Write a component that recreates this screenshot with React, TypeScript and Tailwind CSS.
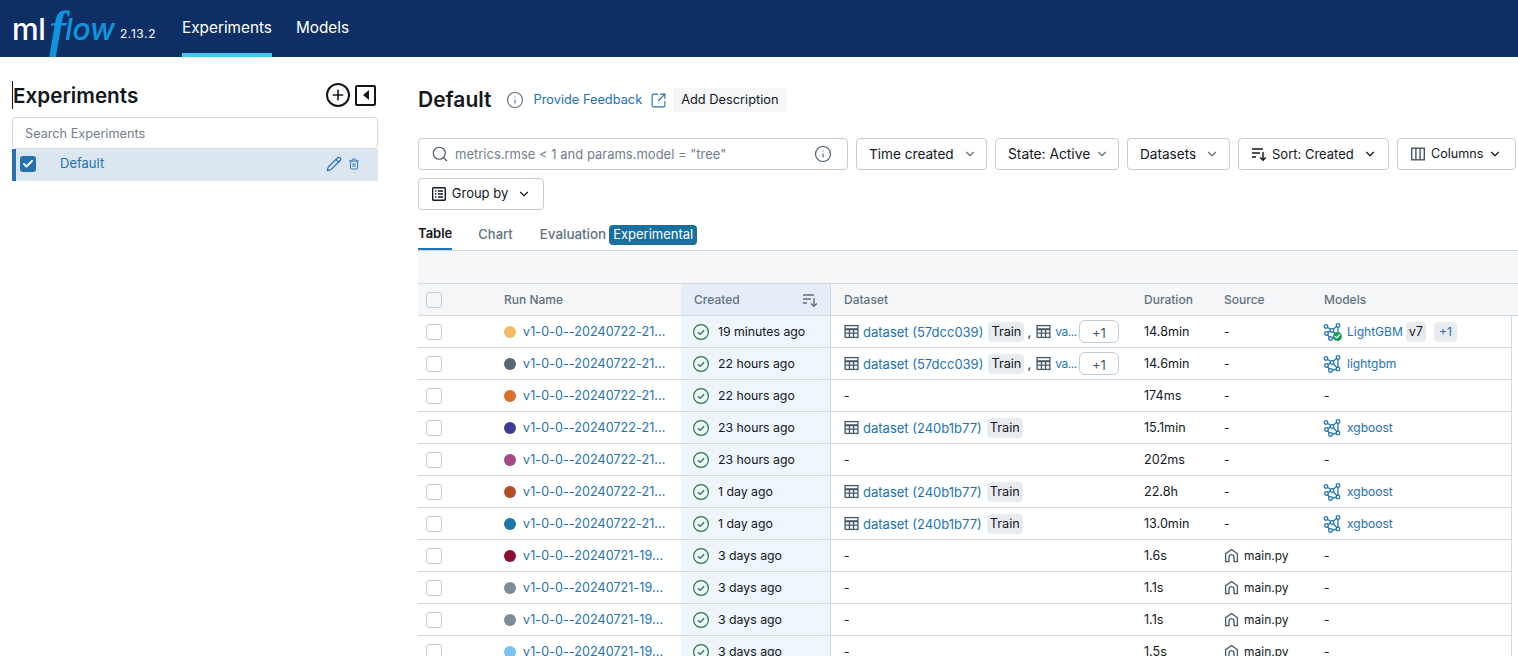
import { ChevronDown, Search, Info, Pencil, Trash2, SquareArrowOutUpRight, Check, Plus } from 'lucide-react'

type Row = {
  color: string
  name: string
  created: string
  dataset?: string
  extra?: boolean
  duration: string
  source?: string
  model?: string
  logged?: boolean
}

const rows: Row[] = [
  { color: '#f5bb61', name: 'v1-0-0--20240722-21...', created: '19 minutes ago', dataset: 'dataset (57dcc039)', extra: true, duration: '14.8min', model: 'LightGBM', logged: true },
  { color: '#566879', name: 'v1-0-0--20240722-21...', created: '22 hours ago', dataset: 'dataset (57dcc039)', extra: true, duration: '14.6min', model: 'lightgbm' },
  { color: '#d96f2b', name: 'v1-0-0--20240722-21...', created: '22 hours ago', duration: '174ms' },
  { color: '#3f3d8f', name: 'v1-0-0--20240722-21...', created: '23 hours ago', dataset: 'dataset (240b1b77)', duration: '15.1min', model: 'xgboost' },
  { color: '#a6498a', name: 'v1-0-0--20240722-21...', created: '23 hours ago', duration: '202ms' },
  { color: '#b34d26', name: 'v1-0-0--20240722-21...', created: '1 day ago', dataset: 'dataset (240b1b77)', duration: '22.8h', model: 'xgboost' },
  { color: '#1d77a8', name: 'v1-0-0--20240722-21...', created: '1 day ago', dataset: 'dataset (240b1b77)', duration: '13.0min', model: 'xgboost' },
  { color: '#8c0f33', name: 'v1-0-0--20240721-19...', created: '3 days ago', duration: '1.6s', source: 'main.py' },
  { color: '#7d8c99', name: 'v1-0-0--20240721-19...', created: '3 days ago', duration: '1.1s', source: 'main.py' },
  { color: '#7d8c99', name: 'v1-0-0--20240721-19...', created: '3 days ago', duration: '1.1s', source: 'main.py' },
  { color: '#7cc0f2', name: 'v1-0-0--20240721-19...', created: '3 days ago', duration: '1.5s', source: 'main.py' },
]

const SortIcon = ({ className }: { className?: string }) => (
  <svg viewBox="0 0 16 16" fill="none" stroke="currentColor" strokeWidth="1.4" className={className}>
    <path d="M1 3h11M1 7h8M1 11h4" />
    <path d="M12 6v8M9.2 11.4 12 14.2l2.8-2.8" />
  </svg>
)

const ColumnsIcon = ({ className }: { className?: string }) => (
  <svg viewBox="0 0 16 16" fill="none" stroke="currentColor" strokeWidth="1.4" className={className}>
    <rect x="1.7" y="2.2" width="12.6" height="11.6" />
    <path d="M5.9 2.2v11.6M10.1 2.2v11.6" />
  </svg>
)

const GroupIcon = ({ className }: { className?: string }) => (
  <svg viewBox="0 0 16 16" fill="none" stroke="currentColor" strokeWidth="1.4" className={className}>
    <rect x="1.7" y="1.7" width="12.6" height="12.6" rx="1" />
    <path d="M4 5h1.4M7 5h5M4 8h1.4M7 8h5M4 11h1.4M7 11h5" />
  </svg>
)

const TableIcon = ({ className }: { className?: string }) => (
  <svg viewBox="0 0 16 16" fill="none" stroke="currentColor" strokeWidth="1.4" className={className}>
    <rect x="1.2" y="1.7" width="13.6" height="12.6" />
    <path d="M1.2 5.6h13.6" strokeWidth="2.2" />
    <path d="M5.8 5.6v8.7M10.2 5.6v8.7M1.2 9.8h13.6" />
  </svg>
)

const HomeIcon = ({ className }: { className?: string }) => (
  <svg viewBox="0 0 16 16" fill="none" stroke="currentColor" strokeWidth="1.4" className={className}>
    <path d="M1.7 14.5V6.2L8 1.6l6.3 4.6v8.3h-3.6V9.8a2.7 2.7 0 0 0-5.4 0v4.7z" strokeLinejoin="round" />
  </svg>
)

const ModelIcon = ({ logged }: { logged?: boolean }) => (
  <span className="relative mr-[6px] ml-[-1px] inline-block h-[18px] w-[18px] shrink-0">
    <svg viewBox="0 0 18 18" fill="none" stroke="#2272b4" strokeWidth="1.3" className="h-[18px] w-[18px]">
      <path d="M3 3.5 9 7l6-4.5M9 7l-5.5 3.5L7.5 15.5 15 14 9 7M15 2.5 15 14" />
      <circle cx="3" cy="3.5" r="1.8" fill="white" />
      <circle cx="15" cy="2.5" r="1.8" fill="white" />
      <circle cx="9" cy="7.5" r="1.8" fill="white" />
      <circle cx="3.5" cy="10.5" r="1.8" fill="white" />
      <circle cx="7.5" cy="15.5" r="1.8" fill="white" />
      <circle cx="15" cy="14" r="1.8" fill="white" />
    </svg>
    {logged && (
      <span className="absolute right-[-1px] bottom-0 flex h-[9px] w-[9px] items-center justify-center rounded-full bg-[#1f9d55]">
        <Check className="h-[7px] w-[7px] text-white" strokeWidth={4} />
      </span>
    )}
  </span>
)

const CheckCircle = () => (
  <svg viewBox="0 0 16 16" fill="none" stroke="#277c43" strokeWidth="1.2" className="h-4 w-4 shrink-0">
    <circle cx="8" cy="8" r="7.4" />
    <path d="m4.9 8.3 2.2 2.1 4-4.2" strokeWidth="1.3" />
  </svg>
)

const Tag = ({ children }: { children: React.ReactNode }) => (
  <span className="flex h-5 items-center rounded-[4px] bg-[#e8ecf0] px-[3px] text-[12.7px] text-[#11171c]">{children}</span>
)

const FilterButton = ({
  label,
  icon,
  width,
  text,
  chevron,
}: {
  label: string
  icon?: React.ReactNode
  width: string
  text: string
  chevron: string
}) => (
  <button className={`flex h-8 ${width} shrink-0 items-center justify-start rounded-[4px] border border-[#c0cdd8] bg-white pl-[12px] leading-5 text-[#11171c]`}>
    {icon}
    <span className={text}>{label}</span>
    <ChevronDown className={`h-[14px] w-[14px] ${chevron}`} strokeWidth={2} />
  </button>
)

export default function App() {
  return (
    <div className="h-[656px] w-[1518px] overflow-hidden bg-white font-['Inter',sans-serif] text-[13px] text-[#11171c]">
      {/* Header */}
      <header className="flex h-[57px] items-stretch bg-[#0e2f64]">
        <div className="flex w-[182px] items-center pl-[12px]">
          <span className="text-[30px] leading-none font-medium tracking-[-0.5px] text-white">ml</span>
          <span className="ml-[4px] font-['Liberation_Serif',serif] text-[50px] leading-none font-bold text-[#0f95e0] italic">f</span>
          <span className="ml-[-1px] text-[30px] leading-none font-medium text-[#0f95e0] italic">low</span>
          <span className="mt-[10px] ml-[5px] text-[12px] tracking-[0.6px] text-white">2.13.2</span>
        </div>
        <div className="flex h-full w-[90px] items-center justify-center border-b-[4px] border-[#43c9ed] pt-[3px] text-[15.3px] text-white">Experiments</div>
        <div className="ml-6 flex items-center pb-[1px] text-[15.3px] text-white">Models</div>
      </header>

      <div className="flex">
        {/* Sidebar */}
        <aside className="w-[418px] shrink-0 pt-[24px] pl-3">
          <div className="flex h-[28px] w-[366px] items-center justify-between">
            <h1 className="border-l border-[#11171c] pt-[2px] text-[20.7px] leading-[26px] font-semibold">Experiments</h1>
            <div className="flex items-center gap-[5px] pr-[2px]">
              <span className="flex h-[24px] w-[24px] items-center justify-center rounded-full border-2 border-[#11171c]">
                <Plus className="h-4 w-4" strokeWidth={2.4} />
              </span>
              <span className="flex h-[21px] w-[21px] items-center justify-center rounded-[2px] border-2 border-[#11171c]">
                <span className="h-0 w-0 border-y-[5px] border-r-[6px] border-y-transparent border-r-[#11171c]" />
              </span>
            </div>
          </div>
          <div className="mt-[8px] flex h-8 w-[366px] items-center rounded-[4px] border border-[#d1d9e1] pt-[2px] pl-3 text-[12.7px] text-[#6f8090]">Search Experiments</div>
          <div className="flex h-8 w-[366px] items-center border-l-4 border-[#2272b4] bg-[#dbe6f0] pb-[2px] text-[13px] text-[#2272b4]">
            <span className="ml-1 flex h-4 w-4 items-center justify-center rounded-[3px] bg-[#2272b4]">
              <Check className="h-3 w-3 text-white" strokeWidth={4} />
            </span>
            <span className="ml-6">Default</span>
            <Pencil className="mr-[6px] ml-auto h-[16px] w-[16px]" strokeWidth={1.8} />
            <Trash2 className="mr-[18px] h-3 w-3" strokeWidth={1.8} />
          </div>
        </aside>

        {/* Main */}
        <main className="min-w-0 flex-1">
          <div className="mt-[29px] flex h-[28px] items-center">
            <h2 className="text-[21px] leading-[28px] font-semibold">Default</h2>
            <Info className="ml-[14px] h-[18px] w-[18px] text-[#5f7281]" strokeWidth={1.5} />
            <span className="ml-[10px] text-[12.8px] text-[#2272b4]">Provide Feedback</span>
            <SquareArrowOutUpRight className="ml-[8px] h-[17px] w-[17px] text-[#2272b4]" strokeWidth={1.6} />
            <span className="ml-[6px] flex h-6 items-center rounded-[4px] bg-[#f5f6f7] px-2 text-[12.8px]">Add Description</span>
          </div>

          {/* Filters */}
          <div className="mt-[24px] flex gap-2">
            <div className="flex h-8 w-[430px] shrink-0 items-center rounded-[4px] border border-[#c0cdd8] pr-[15px] pl-[12px] text-[13px] leading-5 text-[#6f8090]">
              <Search className="mr-[6px] h-[18px] w-[18px] text-[#44586a]" strokeWidth={1.5} />
              <span>metrics.rmse &lt; 1 and params.model = "tree"</span>
              <Info className="ml-auto h-[18px] w-[18px] text-[#44586a]" strokeWidth={1.5} />
            </div>
            <FilterButton label="Time created" width="w-[131px]" text="text-[13.6px]" chevron="ml-[9px] text-[#5f7281]" />
            <FilterButton label="State: Active" width="w-[124px]" text="text-[13.8px]" chevron="ml-[5px] text-[#5f7281]" />
            <FilterButton label="Datasets" width="w-[103px]" text="text-[13.6px]" chevron="ml-[9px] text-[#5f7281]" />
            <FilterButton label="Sort: Created" width="w-[151px]" text="text-[13px]" chevron="ml-[9px] text-[#11171c]" icon={<SortIcon className="mr-[5px] h-4 w-4" />} />
            <FilterButton label="Columns" width="w-[119px]" text="text-[12.6px]" chevron="ml-[5px] text-[#11171c]" icon={<ColumnsIcon className="mr-[5px] h-4 w-4 text-[#44586a]" />} />
          </div>
          <button className="mt-2 flex h-8 w-[126px] items-center justify-center rounded-[4px] border border-[#c0cdd8] text-[13px]">
            <GroupIcon className="mr-[5px] h-4 w-4" />
            <span>Group by</span>
            <ChevronDown className="ml-[9px] h-[14px] w-[14px]" strokeWidth={2} />
          </button>

          {/* Tabs */}
          <div className="mt-[9px] flex h-[32px] items-center border-b border-[#d1d9e1] text-[13px] font-medium text-[#5f7281]">
            <span className="flex h-full items-center border-b-2 border-[#2272b4] font-semibold text-[#11171c]">Table</span>
            <span className="ml-[26px]">Chart</span>
            <span className="ml-[27px] text-[13.4px]">Evaluation</span>
            <span className="ml-[3px] flex h-5 items-center rounded-[4px] bg-[#1a6f9f] px-1 font-normal text-white">Experimental</span>
          </div>
          <div className="h-[33px] border-b border-[#d1d9e1] bg-[#f5f6f7]" />

          {/* Table header */}
          <div className="flex h-[32px] items-center border-b border-[#d1d9e1] bg-[#f5f6f7] text-[12px] font-medium text-[#5f7281]">
            <span className="w-[86px] pl-2"><span className="block h-4 w-4 rounded-[3px] border border-[#c0cdd8]" /></span>
            <span className="w-[177px]">Run Name</span>
            <div className="flex h-full w-[150px] items-center justify-between border-r border-[#d1d9e1] bg-[#e6edf6] pr-[12px] pl-[13px]">
              <span>Created</span>
              <SortIcon className="h-4 w-4" />
            </div>
            <span className="w-[313px] pl-[13px]">Dataset</span>
            <span className="w-[80px]">Duration</span>
            <span className="w-[100px]">Source</span>
            <span>Models</span>
          </div>

          {/* Table rows */}
          {rows.map((row, i) => (
            <div key={i} className="flex h-[32px] w-[1094px] items-center border-r border-b border-[#d1d9e1] text-[12px] leading-4">
              <span className="w-[86px] pl-2"><span className="block h-4 w-4 rounded-[3px] border border-[#c0cdd8]" /></span>
              <span className="flex w-[177px] items-center">
                <span className="mr-2 h-3 w-3 rounded-full" style={{ backgroundColor: row.color }} />
                <span className="ml-[-1px] text-[12.5px] tracking-[0.1px] text-[#2272b4]">{row.name}</span>
              </span>
              <div className="flex h-full w-[150px] items-center border-r border-[#d1d9e1] bg-[#eef5fc] pl-[12px]">
                <CheckCircle />
                <span className="ml-[9px] text-[12.3px]">{row.created}</span>
              </div>
              <div className="flex h-full w-[313px] items-center pl-[13px]">
                {row.dataset ? (
                  <>
                    <TableIcon className="mr-1 h-[15px] w-[15px] text-[#44586a]" />
                    <span className="mr-[5px] text-[13px] text-[#2272b4]">{row.dataset}</span>
                    <Tag>Train</Tag>
                    {row.extra && (
                      <>
                        <span className="mr-[5px] ml-[3px] text-[13px]">,</span>
                        <TableIcon className="mr-1 h-[15px] w-[15px] text-[#44586a]" />
                        <span className="text-[12px] tracking-[-0.4px] text-[#2272b4]">va...</span>
                        <span className="ml-[2px] flex h-[23px] w-[40px] items-center justify-center rounded-[6px] border border-[#c0cdd8] pt-[2px] text-[13px] text-[#44586a]">+1</span>
                      </>
                    )}
                  </>
                ) : (
                  '-'
                )}
              </div>
              <span className="w-[80px] text-[12.6px]">{row.duration}</span>
              <span className="flex w-[100px] items-center">
                {row.source ? (
                  <>
                    <HomeIcon className="mr-[5px] h-[15px] w-[15px] text-[#44586a]" />
                    {row.source}
                  </>
                ) : (
                  '-'
                )}
              </span>
              <span className="flex items-center">
                {row.model ? (
                  <>
                    <ModelIcon logged={row.logged} />
                    <span className="text-[#2272b4]">{row.model}</span>
                    {row.logged && (
                      <>
                        <span className="ml-[3px]"><Tag>v7</Tag></span>
                        <span className="ml-[8px] flex h-5 items-center rounded-[4px] bg-[#e8ecf0] px-[5px] text-[#2272b4]">+1</span>
                      </>
                    )}
                  </>
                ) : (
                  '-'
                )}
              </span>
            </div>
          ))}
        </main>
      </div>
    </div>
  )
}
